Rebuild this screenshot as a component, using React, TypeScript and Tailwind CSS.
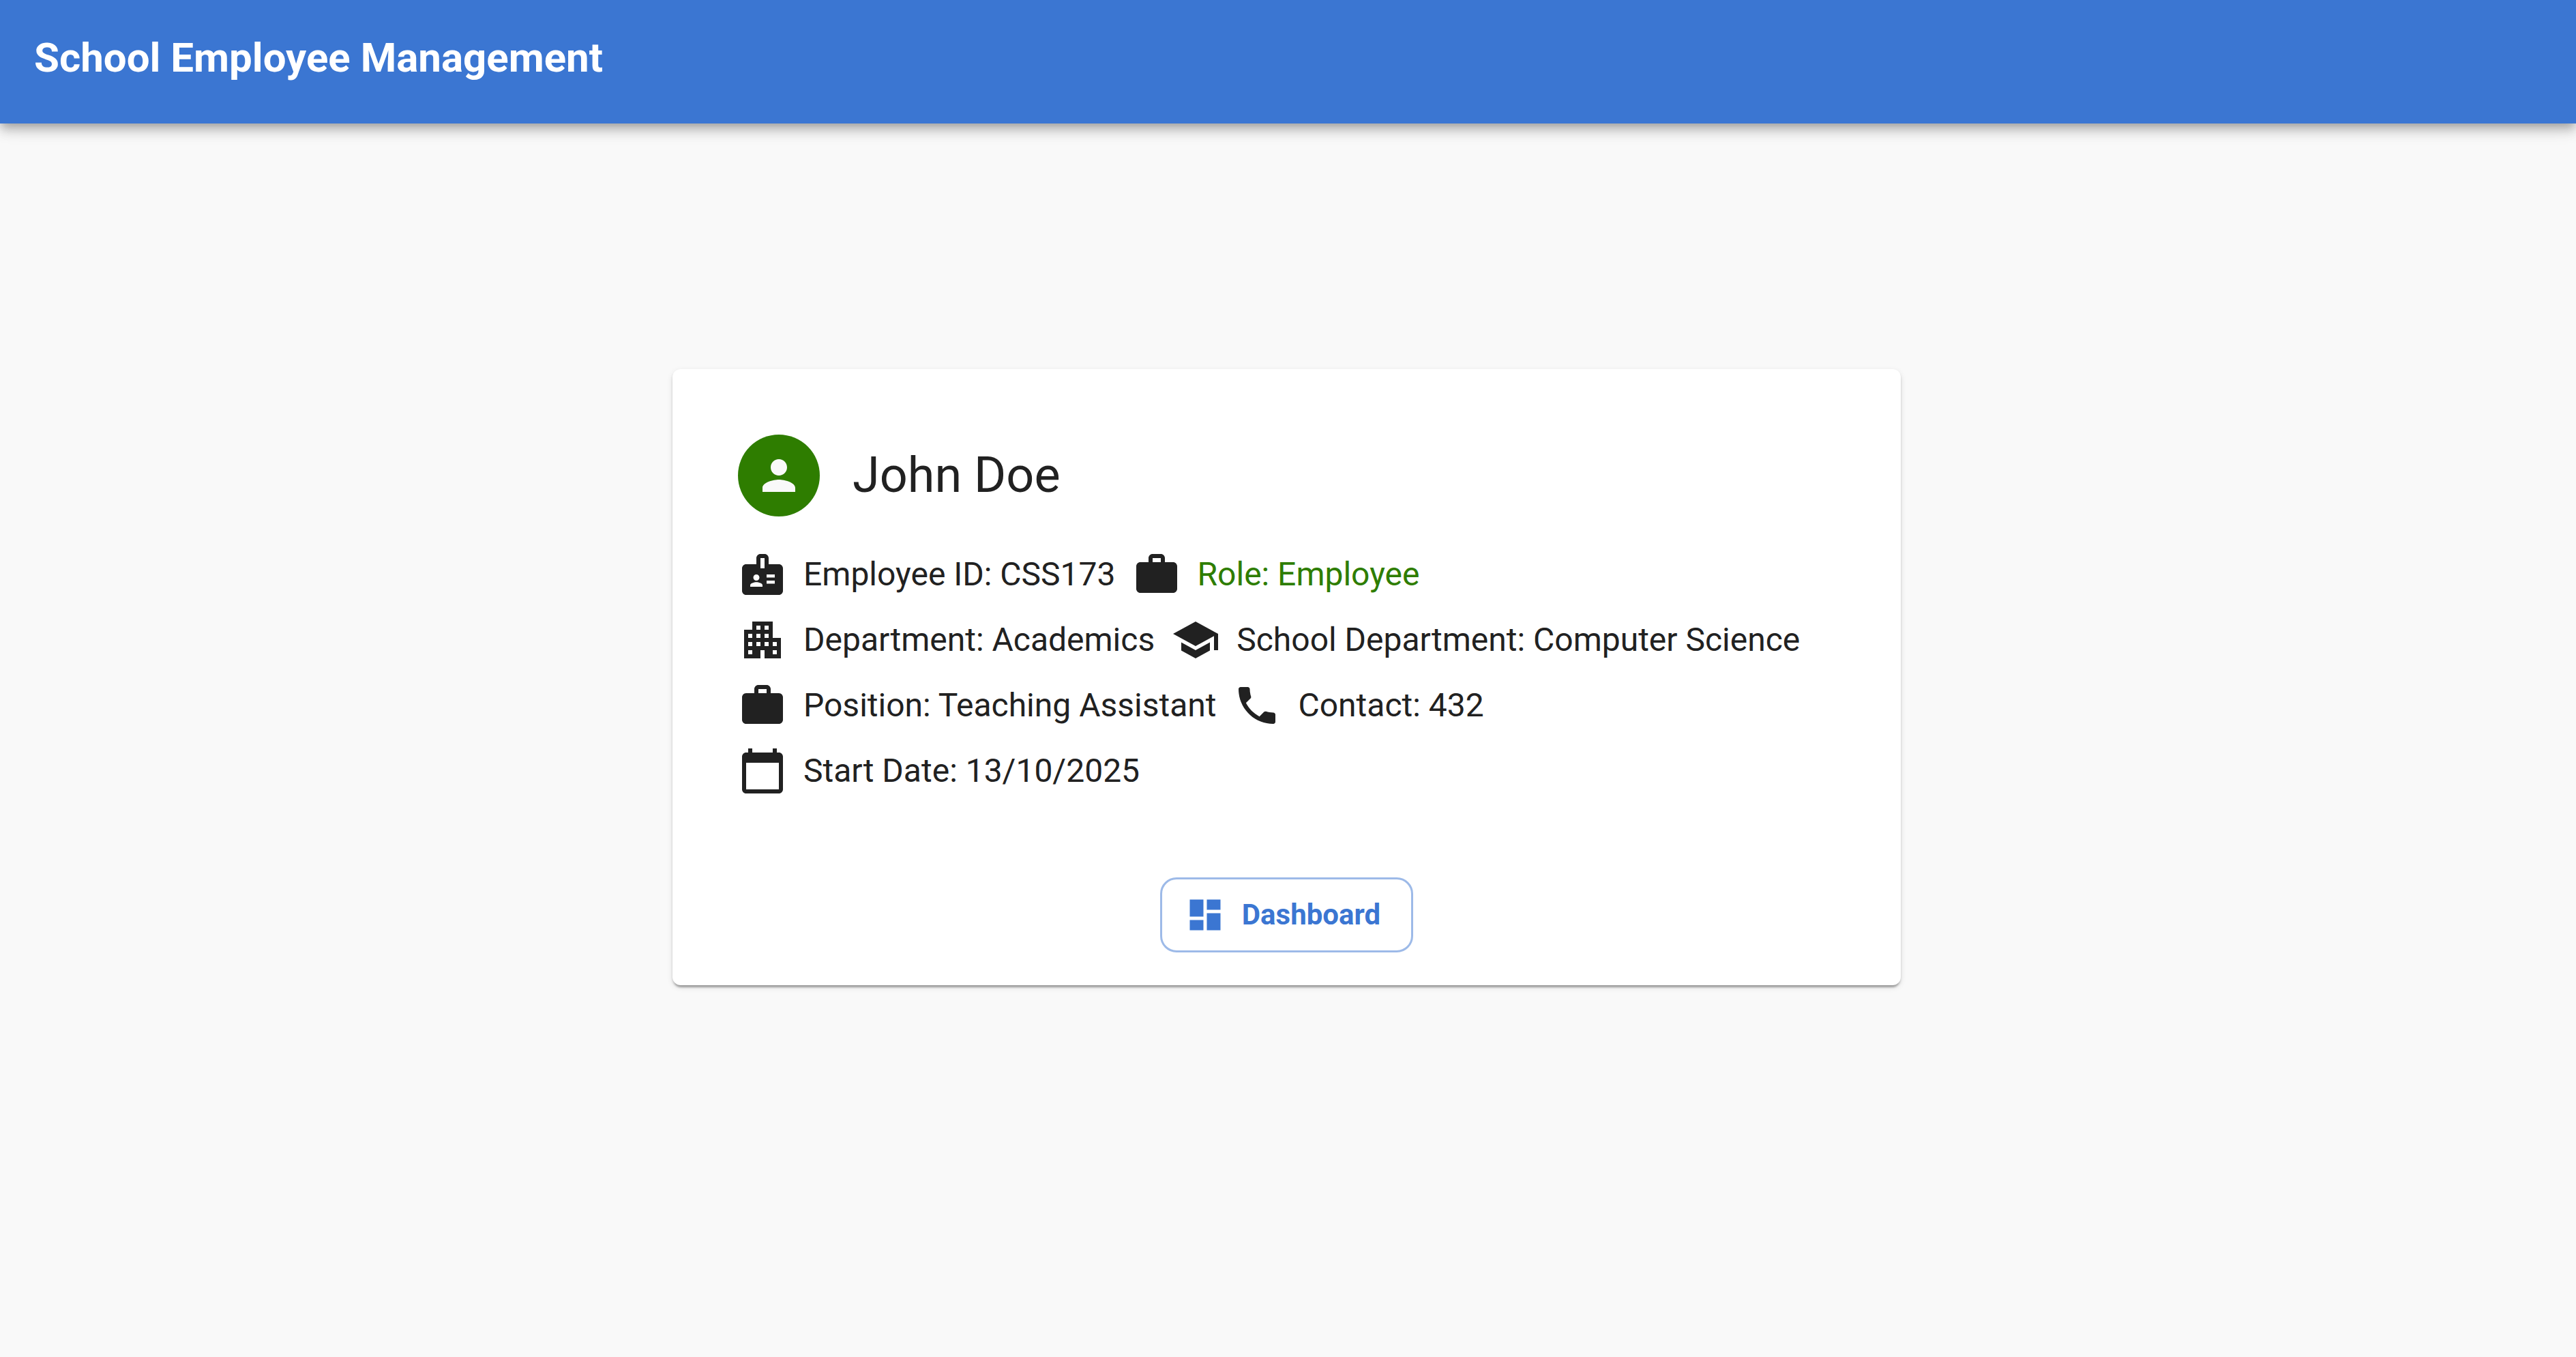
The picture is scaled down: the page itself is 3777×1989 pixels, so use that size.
import type { ReactNode } from "react";
import type { IconType } from "react-icons";
import {
  MdApartment,
  MdBadge,
  MdCalendarToday,
  MdDashboard,
  MdPerson,
  MdPhone,
  MdSchool,
  MdWork,
} from "react-icons/md";

function Detail({ icon: Icon, children }: { icon: IconType; children: ReactNode }) {
  return (
    <div className="flex items-center gap-6">
      <Icon className="size-[72px] shrink-0" aria-hidden="true" />
      <span>{children}</span>
    </div>
  );
}

function DetailRow({ children }: { children: ReactNode }) {
  return <div className="flex flex-wrap items-center gap-6">{children}</div>;
}

export default function App() {
  return (
    <div className="flex min-h-screen flex-col bg-[#f9f9f9] font-['Roboto',sans-serif] text-[#212121]">
      <header className="bg-[#3b76d2] px-[50px] pt-[37px] pb-12 text-white shadow-[0_6px_12px_-3px_rgba(0,0,0,0.2),0_12px_15px_0_rgba(0,0,0,0.14),0_3px_30px_0_rgba(0,0,0,0.12)]">
        <h1 className="text-[60px] leading-[96px] font-bold">School Employee Management</h1>
      </header>

      <main className="flex justify-center pt-[360px] pr-1">
        <section className="w-full max-w-[1801px] rounded-xl bg-white px-24 pt-24 pb-12 shadow-[0_6px_3px_-3px_rgba(0,0,0,0.2),0_3px_3px_0_rgba(0,0,0,0.14),0_3px_9px_0_rgba(0,0,0,0.12)]">
          <div className="flex items-center gap-12">
            <div className="flex size-[120px] items-center justify-center rounded-full bg-[#2e7d00] text-[#f9f9f9]">
              <MdPerson className="size-[72px]" aria-hidden="true" />
            </div>
            <h2 className="text-[72px] leading-[96px] font-normal">John Doe</h2>
          </div>

          <div className="mt-[49px] flex flex-col gap-6 text-[48px] leading-[72px]">
            <DetailRow>
              <Detail icon={MdBadge}>Employee ID: CSS173</Detail>
              <Detail icon={MdWork}>
                <span className="text-[#2e7d00]">Role: Employee</span>
              </Detail>
            </DetailRow>
            <DetailRow>
              <Detail icon={MdApartment}>Department: Academics</Detail>
              <Detail icon={MdSchool}>School Department: Computer Science</Detail>
            </DetailRow>
            <DetailRow>
              <Detail icon={MdWork}>Position: Teaching Assistant</Detail>
              <Detail icon={MdPhone}>Contact: 432</Detail>
            </DetailRow>
            <DetailRow>
              <Detail icon={MdCalendarToday}>Start Date: 13/10/2025</Detail>
            </DetailRow>
          </div>

          <div className="mt-[120px] flex justify-center">
            <button
              type="button"
              className="flex items-center gap-6 rounded-3xl border-3 border-[#3b76d2]/50 py-[15px] pr-[45px] pl-[33px] text-[42px] leading-[74px] font-bold text-[#3b76d2]"
            >
              <MdDashboard className="size-[60px]" aria-hidden="true" />
              Dashboard
            </button>
          </div>
        </section>
      </main>
    </div>
  );
}
